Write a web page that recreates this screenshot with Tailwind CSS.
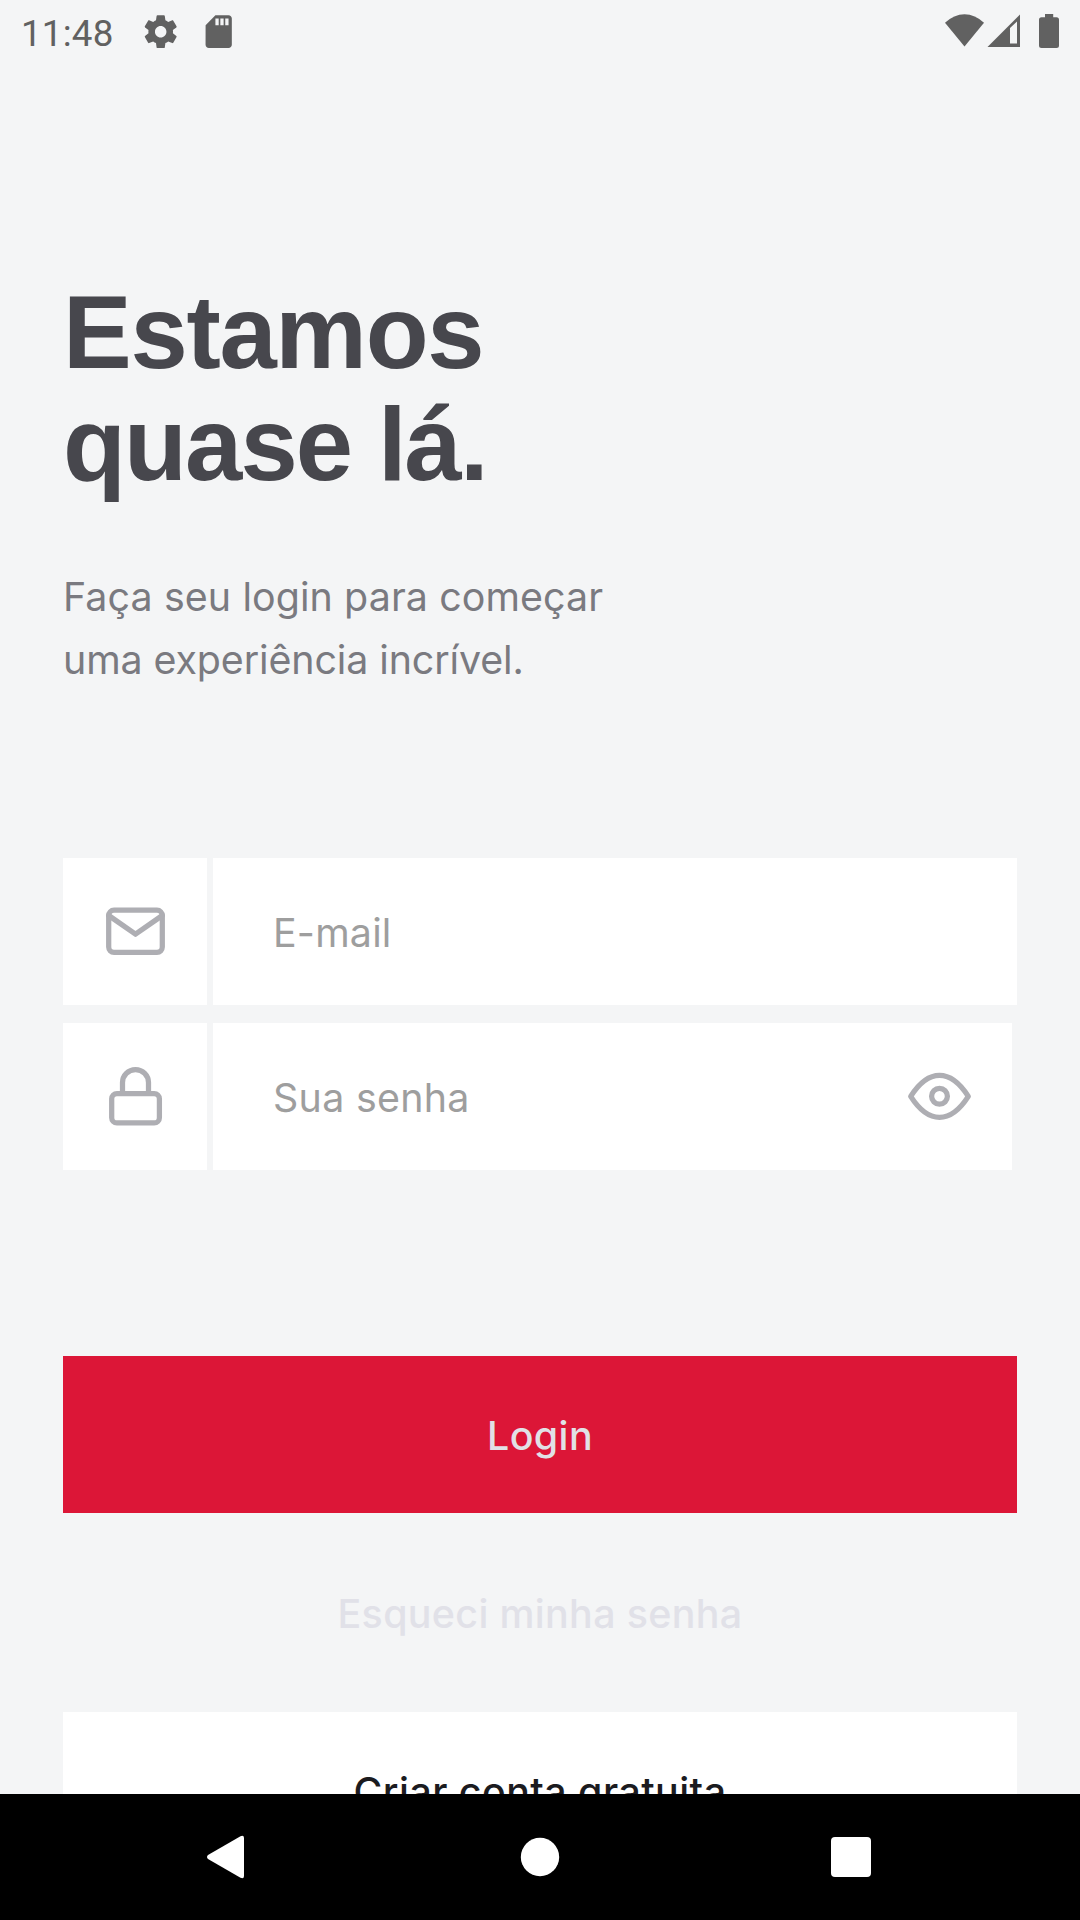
<!DOCTYPE html>
<html lang="pt-BR">
<head>
<meta charset="utf-8">
<title>Login</title>
<script src="https://cdn.jsdelivr.net/npm/@tailwindcss/browser@4"></script>
</head>
<body class="flex h-[1920px] w-[1080px] flex-col overflow-hidden bg-[#f4f5f6] font-['Inter',sans-serif] text-[39.375px]">
  <!-- Status bar -->
  <header class="flex h-[63px] shrink-0 items-start justify-between text-[#616161]">
    <div class="flex items-start pl-[21px]">
      <span class="w-[120px] pt-[12px] font-['Roboto',sans-serif] text-[36.75px] leading-[43px] tracking-[0.2px]">11:48</span>
      <svg class="mt-[12px] size-[39.4px]" viewBox="0 0 24 24" fill="currentColor"><path d="M19.43 12.98c.04-.32.07-.64.07-.98s-.03-.66-.07-.98l2.11-1.65c.19-.15.24-.42.12-.64l-2-3.46c-.12-.22-.39-.3-.61-.22l-2.49 1c-.52-.4-1.08-.73-1.69-.98l-.38-2.65C14.46 2.18 14.25 2 14 2h-4c-.25 0-.46.18-.49.42l-.38 2.65c-.61.25-1.17.59-1.69.98l-2.49-1c-.23-.09-.49 0-.61.22l-2 3.46c-.13.22-.07.49.12.64l2.11 1.65c-.04.32-.07.65-.07.98s.03.66.07.98l-2.11 1.65c-.19.15-.24.42-.12.64l2 3.46c.12.22.39.3.61.22l2.49-1c.52.4 1.08.73 1.69.98l.38 2.65c.03.24.24.42.49.42h4c.25 0 .46-.18.49-.42l.38-2.65c.61-.25 1.17-.59 1.69-.98l2.49 1c.23.09.49 0 .61-.22l2-3.46c.12-.22.07-.49-.12-.64l-2.11-1.65zM12 15.5c-1.93 0-3.5-1.57-3.5-3.5s1.570-3.5 3.500-3.5 3.500 1.570 3.500 3.500-1.570 3.500-3.500 3.500z"/></svg>
      <svg class="mt-[12px] ml-[19px] size-[39.4px]" viewBox="0 0 24 24" fill="currentColor"><path d="M18 2h-8L4.020 8 4 20c0 1.100.9 2 2 2h12c1.100 0 2-.9 2-2V4c0-1.100-.9-2-2-2zm-6 6h-2V4h2v4zm3 0h-2V4h2v4zm3 0h-2V4h2v4z"/></svg>
    </div>
    <svg class="h-[63px] w-[140px]" viewBox="940 0 140 63" fill="currentColor">
      <path d="M945 22.800Q954 14.200 964.500 14.200T984 22.800L964.500 46.500Z"/>
      <path fill-rule="evenodd" d="M1020 14.500V47H987.500ZM1010 28V43.500H1017V21.500Z"/>
      <path d="M1045 14H1053.200V17.300H1056.500Q1059 17.300 1059 19.800V45.500Q1059 48 1056.500 48H1041.500Q1039 48 1039 45.500V19.800Q1039 17.300 1041.500 17.300H1045Z"/>
    </svg>
  </header>

  <main class="flex min-h-0 flex-1 flex-col overflow-hidden px-[63px] pt-[214px]">
    <h1 class="shrink-0 font-['Liberation_Sans',sans-serif] text-[103px] leading-[112px] font-bold text-[#47474d]"><span class="tracking-[-1.3px]">Estamos</span><br><span class="tracking-[-1.9px]">quase lá.</span></h1>
    <p class="mt-[64px] shrink-0 leading-[63px] text-[#7a7a80]"><span class="tracking-[0.1px]">Faça seu login para começar</span><br><span class="tracking-[-0.1px]">uma experiência incrível.</span></p>

    <form class="mt-[167px] flex shrink-0 flex-col">
      <div class="flex h-[147px] gap-[6px]">
        <div class="w-[144px] bg-white">
          <svg class="size-full" viewBox="63 858 144 147" fill="none" stroke="#aeaeb3" stroke-width="5.25" stroke-linejoin="round" stroke-linecap="round"><rect x="108.700" y="910.200" width="53.600" height="42.200" rx="5.300"/><path d="M108.700 915.500 135.500 934.200 162.300 915.500"/></svg>
        </div>
        <div class="flex flex-1 items-center bg-white pt-[2px] pl-[60px] font-[370] tracking-[0.2px] text-[#9e9e9e]">E-mail</div>
      </div>
      <div class="mt-[18px] mr-[5px] flex h-[147px] gap-[6px]">
        <div class="w-[144px] bg-white">
          <svg class="size-full" viewBox="63 1023 144 147" fill="none" stroke="#aeaeb3" stroke-width="5.250" stroke-linejoin="round"><rect x="111.700" y="1093.600" width="47.700" height="29.300" rx="5.200"/><path d="M122.500 1093.700V1082.600a13 13 0 0 1 26 0V1093.700"/></svg>
        </div>
        <div class="flex flex-1 items-center justify-between bg-white pr-[33px] pl-[60px] text-[#9e9e9e]">
          <span class="pt-[2px] font-[370] tracking-[0.3px]">Sua senha</span>
          <svg class="h-[147px] w-[80px]" viewBox="899 1023 80 147" fill="none" stroke="#aeaeb3" stroke-width="5.250" stroke-linejoin="round"><path d="M910.700 1096.300C916 1088 926 1075.300 939.500 1075.300S963 1088 968.300 1096.300C963 1104.600 953 1117.300 939.500 1117.300S916 1104.600 910.700 1096.300Z"/><circle cx="939.500" cy="1096.300" r="7.900"/></svg>
        </div>
      </div>
    </form>

    <button class="mt-[186px] flex h-[157px] shrink-0 items-center justify-center bg-[#dc1637] pt-[2px] font-medium tracking-[0.4px] text-[#e1e1e6]">Login</button>
    <button class="mt-[42px] flex h-[115px] shrink-0 items-center justify-center pt-[2px] font-medium tracking-[0.35px] text-[#e1e1e8]">Esqueci minha senha</button>
    <button class="mt-[42px] flex h-[157px] shrink-0 items-center justify-center bg-white pt-[2px] font-medium tracking-[0.45px] text-[#1b1b1f]">Criar conta gratuita</button>
  </main>

  <!-- System navigation -->
  <nav class="h-[126px] shrink-0 bg-black">
    <svg class="size-full" viewBox="0 1794 1080 126" fill="white"><path d="M208 1855 240.500 1836.200Q244 1834.700 244 1838V1876Q244 1879.300 240.500 1877.800L208 1859Q206 1857 208 1855Z"/><circle cx="540" cy="1857" r="19.200"/><rect x="831" y="1837" width="40" height="40" rx="4"/></svg>
  </nav>
</body>
</html>
